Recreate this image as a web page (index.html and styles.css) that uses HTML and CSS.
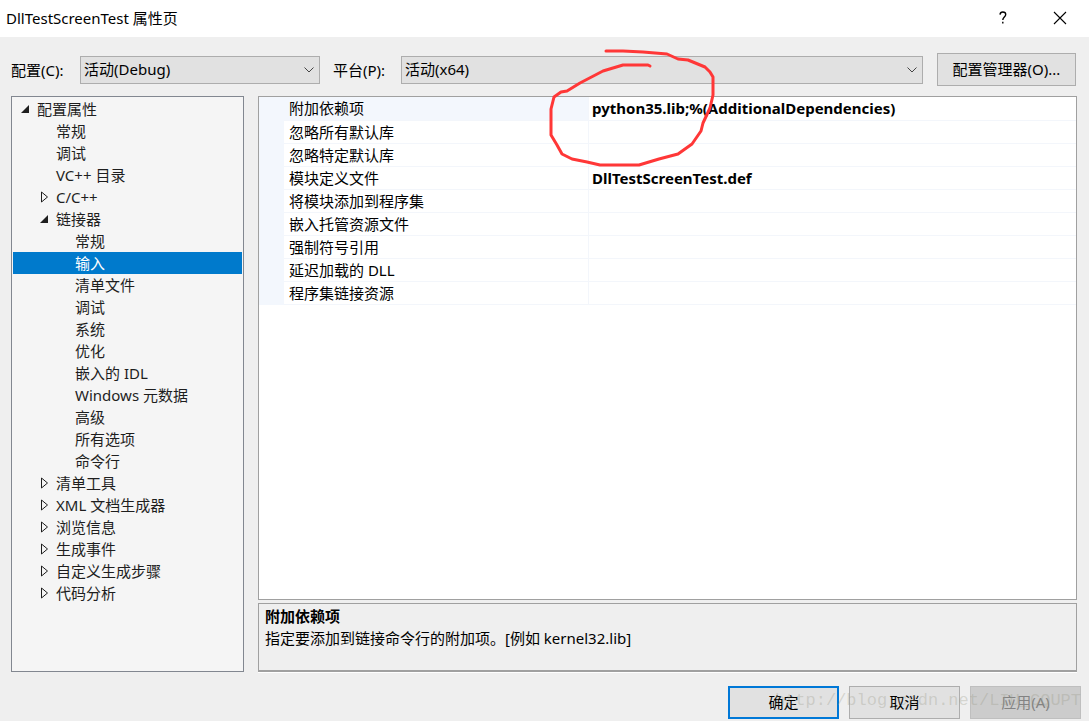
FILE: index.html
```html
<!DOCTYPE html>
<html lang="zh-CN">
<head>
<meta charset="utf-8">
<title>DllTestScreenTest 属性页</title>
<link rel="stylesheet" href="styles.css">
</head>
<body>
<main class="dialog">
  <header class="titlebar">
    <h1 class="title">DllTestScreenTest 属性页</h1>
    <button class="caption-button" type="button" aria-label="帮助"><svg width="10" height="14" viewBox="0 0 10 14" fill="none" stroke="#000" stroke-width="1.4"><path d="M2 3.6C2.2 1.8 3.3 1 4.8 1c1.700 0 2.900 1 2.900 2.600C7.700 6 4.800 6.200 4.800 9"/><path d="M4.800 10.800v1.700"/></svg></button>
    <button class="caption-button" type="button" aria-label="关闭"><svg width="14" height="14" viewBox="0 0 14 14" fill="none" stroke="#000" stroke-width="1.100"><path d="M1 1l12 12M13 1L1 13"/></svg></button>
  </header>

  <div class="toolbar">
    <label class="field-label" for="config">配置(C):</label>
    <div class="combo combo-config">
      <select id="config"><option>活动(Debug)</option></select>
      <svg class="chevron" width="10" height="6" viewBox="0 0 10 6"><path d="M.5.5L5 5L9.500.5"/></svg>
    </div>
    <label class="field-label field-platform" for="platform">平台(P):</label>
    <div class="combo combo-platform">
      <select id="platform"><option>活动(x64)</option></select>
      <svg class="chevron" width="10" height="6" viewBox="0 0 10 6"><path d="M.5.5L5 5L9.500.5"/></svg>
    </div>
    <button class="button manager" type="button">配置管理器(O)...</button>
  </div>

  <div class="content">
    <nav class="tree" aria-label="配置属性">
      <ul>
        <li class="node"><svg class="arrow" viewBox="0 0 10 10"><path class="open" d="M9 1v8H1z"/></svg>配置属性</li>
        <li class="node level-1">常规</li>
        <li class="node level-1">调试</li>
        <li class="node level-1">VC++ 目录</li>
        <li class="node level-1"><svg class="arrow" viewBox="0 0 10 10"><path class="closed" d="M2.500 0v10L8.500 5z"/></svg>C/C++</li>
        <li class="node level-1"><svg class="arrow" viewBox="0 0 10 10"><path class="open" d="M9 1v8H1z"/></svg>链接器</li>
        <li class="node level-2">常规</li>
        <li class="node level-2 selected">输入</li>
        <li class="node level-2">清单文件</li>
        <li class="node level-2">调试</li>
        <li class="node level-2">系统</li>
        <li class="node level-2">优化</li>
        <li class="node level-2">嵌入的 IDL</li>
        <li class="node level-2">Windows 元数据</li>
        <li class="node level-2">高级</li>
        <li class="node level-2">所有选项</li>
        <li class="node level-2">命令行</li>
        <li class="node level-1"><svg class="arrow" viewBox="0 0 10 10"><path class="closed" d="M2.500 0v10L8.500 5z"/></svg>清单工具</li>
        <li class="node level-1"><svg class="arrow" viewBox="0 0 10 10"><path class="closed" d="M2.500 0v10L8.500 5z"/></svg>XML 文档生成器</li>
        <li class="node level-1"><svg class="arrow" viewBox="0 0 10 10"><path class="closed" d="M2.500 0v10L8.500 5z"/></svg>浏览信息</li>
        <li class="node level-1"><svg class="arrow" viewBox="0 0 10 10"><path class="closed" d="M2.500 0v10L8.500 5z"/></svg>生成事件</li>
        <li class="node level-1"><svg class="arrow" viewBox="0 0 10 10"><path class="closed" d="M2.500 0v10L8.500 5z"/></svg>自定义生成步骤</li>
        <li class="node level-1"><svg class="arrow" viewBox="0 0 10 10"><path class="closed" d="M2.500 0v10L8.500 5z"/></svg>代码分析</li>
      </ul>
    </nav>

    <div class="details">
      <div class="grid-panel">
        <table class="properties">
          <tbody>
            <tr class="current"><th scope="row">附加依赖项</th><td>python35.lib;%(AdditionalDependencies)</td></tr>
            <tr><th scope="row">忽略所有默认库</th><td></td></tr>
            <tr><th scope="row">忽略特定默认库</th><td></td></tr>
            <tr><th scope="row">模块定义文件</th><td>DllTestScreenTest.def</td></tr>
            <tr><th scope="row">将模块添加到程序集</th><td></td></tr>
            <tr><th scope="row">嵌入托管资源文件</th><td></td></tr>
            <tr><th scope="row">强制符号引用</th><td></td></tr>
            <tr><th scope="row">延迟加载的 DLL</th><td></td></tr>
            <tr><th scope="row">程序集链接资源</th><td></td></tr>
          </tbody>
        </table>
        <svg class="ink" width="168" height="120" viewBox="0 0 168 120"><path d="M56 3H73L93 4L117 6L128 11L138 12L155 19L160 24L163 29V47L160 60L153 75L151 83L142 96L128 106L109 111L89 117H50L37 114L22 111L12 106L7 97L1 87V61L4 49L11 44L17 43L30 35L53 23L73 17H98L100 18"/></svg>
      </div>
      <section class="description">
        <h2>附加依赖项</h2>
        <p>指定要添加到链接命令行的附加项。[例如 kernel32.lib]</p>
      </section>
    </div>
  </div>

  <footer class="actions">
    <button class="button primary" type="button">确定</button>
    <button class="button" type="button">取消</button>
    <button class="button" type="button" disabled>应用(A)</button>
    <span class="watermark">http://blog.csdn.net/LIU_CQUPT</span>
  </footer>
</main>
</body>
</html>
```
FILE: styles.css
```css
* {
  box-sizing: border-box;
}

body {
  margin: 0;
  background: #efefef;
  color: #000;
  font: 15px/22px "Noto Sans", "Noto Sans CJK SC", sans-serif;
}

button,
select {
  font: inherit;
  color: inherit;
}

.dialog {
  display: flex;
  flex-direction: column;
  min-height: 100vh;
}

.titlebar {
  display: flex;
  height: 37px;
  padding: 0 1px 1px 6px;
  background: #fff;
}

.title {
  flex: 1;
  margin: 0;
  font-size: 15px;
  font-weight: 400;
  line-height: 36px;
}

.caption-button {
  display: grid;
  place-items: center;
  width: 57px;
  padding: 0;
  border: 0;
  background: none;
}

.toolbar {
  display: flex;
  align-items: center;
  padding: 16px 13px 10px 11px;
}

.field-label {
  width: 69px;
}

.field-platform {
  width: 68px;
  margin-left: 13px;
}

.combo {
  display: flex;
  align-items: center;
  height: 28px;
  border: 1px solid #adadad;
  background: #e1e1e1;
}

.combo-config {
  width: 240px;
}

.combo-platform {
  flex: 1;
}

.combo select {
  flex: 1;
  height: 26px;
  padding: 0 3px 2px;
  border: 0;
  background: none;
  appearance: none;
}

.chevron {
  margin-right: 5px;
  fill: none;
  stroke: #444;
}

.button {
  width: 111px;
  height: 33px;
  padding: 0 0 2px;
  border: 1px solid #adadad;
  background: #e1e1e1;
}

.manager {
  width: 139px;
  margin-left: 14px;
}

.content {
  display: flex;
  flex: 1;
  gap: 14px;
  padding: 0 12px 0 11px;
}

.tree {
  width: 233px;
  padding: 1px;
  border: 1px solid #828790;
  background: #f5f5f5;
  color: #1e1e1e;
}

.tree ul {
  margin: 0;
  padding: 0;
  list-style: none;
}

.node {
  display: flex;
  align-items: center;
  height: 22px;
  padding-left: 24px;
}

.level-1 {
  padding-left: 43px;
}

.level-2 {
  padding-left: 62px;
}

.selected {
  background: #007acc;
  color: #fff;
}

.arrow {
  width: 10px;
  height: 10px;
  margin: 0 7px 0 -17px;
  overflow: visible;
}

.open {
  fill: #1e1e1e;
}

.closed {
  fill: none;
  stroke: #1e1e1e;
}

.details {
  display: flex;
  flex: 1;
  flex-direction: column;
  gap: 3px;
}

.grid-panel {
  position: relative;
  flex: 1;
  border: 1px solid #a0a0a0;
  background: #fff;
}

.properties {
  width: 100%;
  border-collapse: collapse;
  table-layout: fixed;
}

.properties th,
.properties td {
  height: 23px;
  padding: 0 0 0 3px;
  border-bottom: 1px solid #f3f6fb;
  line-height: 22px;
  text-align: left;
  white-space: nowrap;
}

.properties th {
  width: 317px;
  padding-left: 5px;
  border-left: 25px solid #f3f7fd;
  border-right: 1px solid #f3f6fb;
  font-weight: 400;
}

.properties td {
  font-weight: 700;
}

.properties .current th {
  background: #f3f7fd;
}

.ink {
  position: absolute;
  top: -49px;
  left: 291px;
  overflow: visible;
  fill: none;
  stroke: #ff3737;
  stroke-width: 3;
  stroke-linecap: round;
  stroke-linejoin: round;
}

.description {
  height: 69px;
  padding: 1px 6px;
  border: 1px solid #a0a0a0;
  border-bottom-width: 2px;
  box-shadow: 0 1px #fff;
}

.description h2,
.description p {
  margin: 0;
  font-size: 15px;
  line-height: 22px;
}

.actions {
  position: relative;
  display: flex;
  justify-content: flex-end;
  gap: 10px;
  padding: 14px 8px 2px;
}

.primary {
  border: 2px solid #0078d7;
}

.button:disabled {
  border-color: #bfbfbf;
  background: #cccccc;
  color: #838383;
}

.watermark {
  position: absolute;
  right: 8px;
  bottom: 8px;
  color: rgba(150, 150, 130, 0.3);
  font: 17px/24px "Liberation Mono", monospace;
  pointer-events: none;
}
```
